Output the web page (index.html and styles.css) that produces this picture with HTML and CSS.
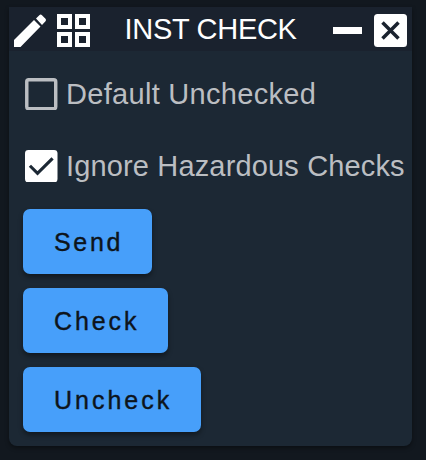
FILE: index.html
```html
<!DOCTYPE html>
<html lang="en">
<head>
<meta charset="utf-8">
<title>Inst Check</title>
<link rel="stylesheet" href="styles.css">
</head>
<body>
<main class="panel">
  <header class="bar">
    <svg class="pencil" viewBox="0 0 34 34"><path d="M1 33V26L21 6L27.500 12.500L7.500 33ZM23 4.500L26.300 1.200Q27.700 0 29 1.200L32.500 4.700Q33.600 6 32.500 7.300L29 11Z"/></svg>
    <svg class="grid" viewBox="0 0 33 33"><path fill-rule="evenodd" d="M0 0H15V15H0ZM4 4V11H11V4ZM18 0H33V15H18ZM22 4V11H29V4ZM0 18H15V33H0ZM4 22V29H11V22ZM18 18H33V33H18ZM22 22V29H29V22Z"/></svg>
    <h1 class="title">INST CHECK</h1>
    <span class="minimize"></span>
    <svg class="close" viewBox="0 0 33 33"><rect width="33" height="33" rx="3.500"/><path d="M8.500 8.500L24.500 24.500M24.500 8.500L8.500 24.500"/></svg>
  </header>
  <div class="content">
    <div class="option">
      <svg class="box" viewBox="0 0 33 33"><rect class="outline" x="1.800" y="1.800" width="29.400" height="29.400" rx="2"/></svg>
      <span class="label default">Default Unchecked</span>
    </div>
    <div class="option">
      <svg class="box" viewBox="0 0 33 33"><rect class="filled" width="33" height="33" rx="3.500"/><path class="tick" d="M5 16L12.700 23.700L28 8.400"/></svg>
      <span class="label">Ignore Hazardous Checks</span>
    </div>
    <div class="actions">
      <button class="button send">Send</button>
      <button class="button check">Check</button>
      <button class="button uncheck">Uncheck</button>
    </div>
  </div>
</main>
</body>
</html>
```
FILE: styles.css
```css
* { box-sizing: border-box; }
body {
  margin: 0;
  height: 460px;
  padding: 7px 14px 14px 9px;
  overflow: hidden;
  background: #12181f;
  font-family: "Liberation Sans", Arial, sans-serif;
}
svg { display: block; flex: none; }
.panel {
  height: 439px;
  border-radius: 0 0 8px 8px;
  background: #1c2834;
  box-shadow: 0 2px 4px rgba(0, 0, 0, .4);
}
.bar {
  display: flex;
  height: 44px;
  padding: 7px 5px 0 4px;
  background: #1a222e;
}
.pencil { width: 34px; height: 34px; fill: #fff; }
.grid { width: 33px; height: 33px; margin-left: 10px; fill: #fff; }
.title {
  width: 208px;
  margin: 0 0 0 34.500px;
  color: #fff;
  font-size: 29px;
  font-weight: 400;
  line-height: 30px;
  letter-spacing: -.3px;
  white-space: nowrap;
}
.minimize {
  flex: none;
  width: 29px;
  height: 7px;
  margin: 13px 12px 0 0;
  background: #fff;
}
.close { width: 33px; height: 33px; fill: #fff; }
.close path { fill: none; stroke: #1a222e; stroke-width: 3.500; }
.content { padding: 7px 0 0 14px; }
.option {
  display: flex;
  align-items: center;
  height: 72px;
  padding-left: 2px;
}
.box { width: 32.500px; height: 32.500px; }
.outline { fill: none; stroke: #bbbec2; stroke-width: 3.500; }
.filled { fill: #fff; }
.tick { fill: none; stroke: #1c2834; stroke-width: 3.200; }
.label {
  margin-left: 8.500px;
  color: #bbbec2;
  font-size: 29px;
  line-height: 34px;
  letter-spacing: .15px;
  white-space: nowrap;
}
.default { letter-spacing: .3px; }
.actions {
  display: flex;
  flex-direction: column;
  align-items: flex-start;
  gap: 14px;
  margin-top: 7px;
}
.button {
  height: 65px;
  padding: 2px 0 0 31px;
  border: 0;
  border-radius: 7px;
  background: #479ffa;
  box-shadow: 0 3px 5px rgba(0, 0, 0, .4);
  color: #0d141b;
  font-family: inherit;
  font-size: 25px;
  text-align: left;
  -webkit-text-stroke: .4px #0d141b;
}
.send { width: 129px; letter-spacing: 2.700px; }
.check { width: 145px; letter-spacing: 2.900px; }
.uncheck { width: 178px; letter-spacing: 3px; }
```
